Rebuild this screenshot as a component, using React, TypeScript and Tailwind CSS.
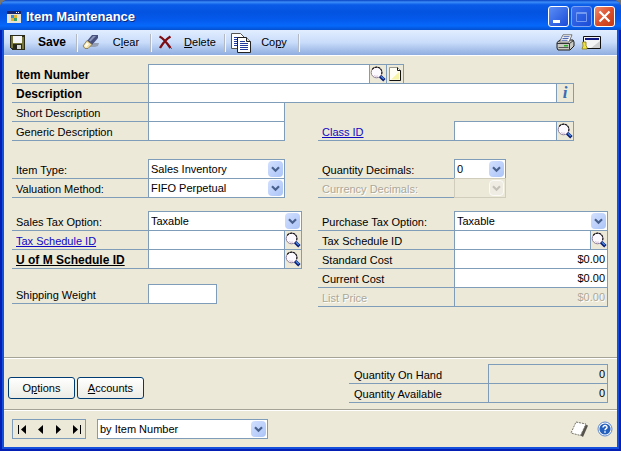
import type { ReactNode } from "react";

const Magnifier = () => (
  <svg width="16" height="16" viewBox="0 0 16 16" className="block">
    <circle cx="6.500" cy="6.500" r="5.300" fill="#fdfaff" stroke="#8d7f98" />
    <path d="M2.200 3.500A5.300 5.300 0 0 1 11.500 8.500" fill="none" stroke="#111" strokeWidth="1.100" strokeDasharray="2.500 .6" />
    <path d="M4 9.500a4 4 0 0 0 4 .5" fill="none" stroke="#d9c6dc" />
    <path d="M10.200 10.200L14.400 14.200" stroke="#0a1e78" strokeWidth="3.400" />
    <path d="M11 10.300L13.800 13" stroke="#4c8be0" strokeWidth="1.300" />
  </svg>
);

const Note = () => (
  <svg width="16" height="16" viewBox="0 0 16 16" className="block">
    <path d="M2.500 1.500h8l3 3v10h-11z" fill="#fffef4" stroke="#9a9a90" />
    <path d="M4 13.500L12 6v7.500z" fill="#f8f4a8" />
    <path d="M10.500 1.500v3h3v10h-11" fill="none" stroke="#111" />
  </svg>
);

const Chevron = ({ off = false }: { off?: boolean }) => (
  <span
    className={
      off
        ? "pointer-events-none absolute inset-y-px right-px flex w-[15px] items-center justify-center rounded-sm border border-[#fbfaf6] bg-[#efede3]"
        : "pointer-events-none absolute inset-y-px right-px flex w-[15px] items-center justify-center rounded-sm bg-gradient-to-br from-[#d3e0fe] to-[#abc4f7]"
    }
  >
    <svg width="9" height="7" viewBox="0 0 9 7">
      <path d="M1 1.200L4.500 4.700L8 1.200" fill="none" stroke={off ? "#c4c2b8" : "#49618e"} strokeWidth="2.200" />
    </svg>
  </span>
);

const FIELD = "-mt-px h-5 border";

function Row({ id, label, tone = "", className = "", children }: { id: string; label: ReactNode; tone?: string; className?: string; children: ReactNode }) {
  return (
    <div className={`flex h-[19px] ${className}`}>
      <label htmlFor={id} className={`w-[136px] shrink-0 border-b border-[#7f9db9] pl-1 pt-0.5 leading-4 whitespace-nowrap ${tone}`}>
        {label}
      </label>
      {children}
    </div>
  );
}

function Text({ id, className = "", value = "", disabled = false }: { id: string; className?: string; value?: string; disabled?: boolean }) {
  return (
    <input
      id={id}
      defaultValue={value}
      disabled={disabled}
      className={`${FIELD} min-w-0 border-[#7f9db9] px-0.5 text-right leading-4 ${disabled ? "bg-[#ece9d8] text-[#aca899] [text-shadow:1px_1px_0_#fff]" : "bg-white"} ${className}`}
    />
  );
}

function Combo({ id, value, className = "", disabled = false }: { id: string; value: string; className?: string; disabled?: boolean }) {
  return (
    <div className={`${FIELD} relative ${disabled ? "border-[#d0cdbd] bg-[#ece9d8]" : "border-[#7f9db9] bg-white"} ${className}`}>
      <select id={id} disabled={disabled} className="block h-[17px] w-full appearance-none pl-0.5 leading-4 outline-none">
        <option>{value}</option>
      </select>
      <Chevron off={disabled} />
    </div>
  );
}

function Lookup({ label, children }: { label: string; children?: ReactNode }) {
  return (
    <button aria-label={label} className={`${FIELD} -ml-px flex w-[18px] shrink-0 items-center justify-center border-[#7f9db9] bg-[#ece9d8]`}>
      {children ?? <Magnifier />}
    </button>
  );
}

function Tool({ icon, children }: { icon: ReactNode; children: ReactNode }) {
  return (
    <button className="flex w-[74px] items-center pr-1">
      <span className="flex w-[26px] shrink-0 justify-center">{icon}</span>
      <span className="flex-1 text-center">{children}</span>
    </button>
  );
}

const Divider = () => <span className="-ml-px h-[18px] w-px self-center bg-[#fbf6e6] shadow-[-1px_0_0_#b4bac4]" />;

const Rule = () => <hr className="h-0.5 border-0 border-t border-b border-t-[#a5a395] border-b-white" />;

const SaveIcon = () => (
  <svg width="15" height="15" viewBox="0 0 15 15" shapeRendering="crispEdges">
    <path d="M0 0h15v15H2L0 13z" fill="#2b2b1c" />
    <path d="M1 1h2v12H1zM12 2h2v12h-2zM3 8h9v1H3z" fill="#77773c" />
    <path d="M3 1h9v7H3z" fill="#f4f5f8" />
    <path d="M5 10h6v4H5z" fill="#d6d6d0" />
    <path d="M5 10h2v4H5z" fill="#222" />
  </svg>
);

const EraserIcon = () => (
  <svg width="18" height="15" viewBox="0 0 18 15">
    <path d="M8 11l4-3h5l-1 3-3 1H8z" fill="#95a0b4" />
    <path d="M10 0h6v3l-6 7-5-4z" fill="#47507c" />
    <path d="M11 1h3L8.500 6.500 7 5.500z" fill="#8a95ba" />
    <path d="M5 5.500L10 9.500L6 13.500H3L1 11z" fill="#f3dfa4" stroke="#7d7048" strokeWidth=".8" />
    <path d="M2.500 10.500l2.500-3 2 1.500-3 3.500z" fill="#fffdf2" />
  </svg>
);

const DeleteIcon = () => (
  <svg width="15" height="15" viewBox="0 0 15 15">
    <path d="M1.500 1.500C5 3 9 8 12.500 13M12.500 1.500C8 4 5 8 2 13" fill="none" stroke="#7c0d12" strokeWidth="2.400" />
    <path d="M12 12l2 2" stroke="#7c0d12" strokeDasharray="1 1" />
  </svg>
);

const CopyIcon = () => (
  <svg width="21" height="20" viewBox="0 0 21 20">
    <path d="M.5.500h9l4 4v11H.5z" fill="#fff" stroke="#555" />
    <path d="M3 4.500h5M3 6.500h3M3 8.500h3M3 10.500h3M3 12.500h3" stroke="#223a9c" />
    <path d="M6.500 4.500h9l4 4v11h-13z" fill="#fff" stroke="#222" />
    <path d="M15.500 4.500v4h4" fill="#ddd" stroke="#222" />
    <path d="M9 8.500h5M9 10.500h8M9 12.500h8M9 14.500h8M9 16.500h8" stroke="#223a9c" />
  </svg>
);

const PrinterIcon = () => (
  <svg width="19" height="17" viewBox="0 0 19 17">
    <path d="M1 8.500L4 6h13l1 2v4l-4 4H2l-1-2z" fill="#c9c9c4" stroke="#1d1d1d" />
    <path d="M1 9.500h12.500L17.500 6.500M13.500 9.500v6" fill="none" stroke="#333" />
    <path d="M7 .8h9L13 8H3.500z" fill="#fff" stroke="#555" strokeWidth=".8" />
    <path d="M7.500 2.700h6M6.500 4.500h6M5.500 6.300h6" stroke="#3a56a8" strokeWidth=".9" />
    <path d="M8 11h4v1.500H8z" fill="#2db52d" />
    <path d="M2.500 13.500h10" stroke="#555" />
  </svg>
);

const WindowIcon = () => (
  <svg width="21" height="15" viewBox="0 0 21 15">
    <path d="M2.500 1.500h17v12h-17z" fill="#f4f4f4" stroke="#111" />
    <path d="M10 13l9-7v7z" fill="#d0d0d0" />
    <path d="M4 3h14v2H4z" fill="#101a80" />
    <path d="M1.500 7H5v4l1 1v2H1l1-3z" fill="#f0e43c" stroke="#85791d" strokeWidth=".8" />
  </svg>
);

const NAV = [
  ["First record", "M0 0h1v9H0zM8 0v9L3 4.500z"],
  ["Previous record", "M7 0v9L2 4.500z"],
  ["Next record", "M2 0v9L7 4.500z"],
  ["Last record", "M8 0h1v9H8zM1 0v9L6 4.500z"],
];

export default function App() {
  return (
    <div className="bg-[#77756d]">
      <div className="flex min-h-screen flex-col overflow-hidden rounded-t-lg bg-[#0a3fd8] font-['Liberation_Sans',Arial,sans-serif] text-[11px] text-black">
        <header className="flex h-[30px] items-center bg-[linear-gradient(#0842c4_0%,#3c8cf8_7%,#0a5ce8_16%,#0353e0_40%,#0458ea_62%,#0668fc_86%,#0450d0_100%)] pt-[3px] pr-1.5 pl-[7px]">
          <svg width="14" height="12" viewBox="0 0 14 12" shapeRendering="crispEdges">
            <path d="M0 0h14v12H0z" fill="#e6e3d3" />
            <path d="M0 0h14v3H0z" fill="#17266e" />
            <path d="M9 1h1v1H9zM11 1h1v1h-1z" fill="#fff" />
            <path d="M4 4h3v3H4z" fill="#3a8edb" />
            <path d="M7 4h3v3H7z" fill="#e3b632" />
            <path d="M4 7h3v3H4z" fill="#e3b632" />
            <path d="M7 7h3v3H7z" fill="#3aa06b" />
          </svg>
          <h1 className="flex-1 pl-[5px] text-[13px] font-bold text-white [text-shadow:1px_1px_0_#0a2a80]">Item Maintenance</h1>
          <div className="flex gap-[2px]">
            <button aria-label="Minimize" className="h-[21px] w-[21px] rounded-[3px] border border-white bg-gradient-to-br from-[#5c8df5] to-[#1b49d8]">
              <svg width="19" height="19" viewBox="0 0 19 19"><path d="M4 13h7v3H4z" fill="#fff" /></svg>
            </button>
            <button aria-label="Maximize" disabled className="h-[21px] w-[21px] rounded-[3px] border border-[#7fa4f2] bg-gradient-to-br from-[#3c70ee] to-[#1a4bd6]">
              <svg width="19" height="19" viewBox="0 0 19 19"><path d="M4.500 5.500h10v9h-10zM4 6.500h11" fill="none" stroke="#7399f0" /></svg>
            </button>
            <button aria-label="Close" className="h-[21px] w-[21px] rounded-[3px] border border-white bg-gradient-to-br from-[#ee8a6c] via-[#dd4f2b] to-[#c23a14]">
              <svg width="19" height="19" viewBox="0 0 19 19"><path d="M4.500 4.500l10 10M14.500 4.500l-10 10" stroke="#fff" strokeWidth="2.200" /></svg>
            </button>
          </div>
        </header>

        <div className="flex flex-1 flex-col border-x-2 border-b-2 border-[#0420b4]">
          <div className="flex flex-1 flex-col border-x-2 border-b-2 border-[#1450dc] bg-[#ece9d8]">
            <div role="toolbar" className="flex h-[26px] border-b border-white bg-gradient-to-b from-[#e2eeff] via-[#c9dcfa] to-[#8fade0]">
              <Tool icon={<SaveIcon />}><b className="text-xs">Save</b></Tool>
              <Divider />
              <Tool icon={<EraserIcon />}>C<u>l</u>ear</Tool>
              <Divider />
              <Tool icon={<DeleteIcon />}><u>D</u>elete</Tool>
              <Divider />
              <Tool icon={<span className="pl-1"><CopyIcon /></span>}>Co<u>p</u>y</Tool>
              <Divider />
              <div className="ml-auto flex items-center gap-1.5 pr-[15px]">
                <button aria-label="Print"><PrinterIcon /></button>
                <button aria-label="Window"><WindowIcon /></button>
              </div>
            </div>

            <main className="flex-1 pt-[9px] pr-[9px] pb-[50px] pl-2">
              <Row id="item" label="Item Number" tone="font-bold text-xs">
                <Text id="item" className="w-[222px]" />
                <Lookup label="Look up item" />
                <Lookup label="Item note"><Note /></Lookup>
              </Row>
              <Row id="desc" label="Description" tone="font-bold text-xs" className="mr-[34px]">
                <Text id="desc" className="flex-1" />
                <Lookup label="Item information">
                  <span className="font-['Liberation_Serif',serif] text-[17px] leading-4 font-bold text-[#3b6cb4] italic">i</span>
                </Lookup>
              </Row>
              <div className="grid grid-cols-[306px_minmax(0,1fr)]">
                <div>
                  <Row id="short" label="Short Description"><Text id="short" className="w-[137px]" /></Row>
                  <Row id="generic" label="Generic Description"><Text id="generic" className="w-[137px]" /></Row>
                </div>
                <Row id="class" label={<a href="#class" className="text-[#1108c4] underline">Class ID</a>} className="mt-[19px] mr-[34px]">
                  <Text id="class" className="flex-1" />
                  <Lookup label="Look up class" />
                </Row>
              </div>

              <div className="mt-[19px] grid grid-cols-[306px_minmax(0,1fr)]">
                <div>
                  <Row id="type" label="Item Type:"><Combo id="type" value="Sales Inventory" className="w-[137px]" /></Row>
                  <Row id="valuation" label="Valuation Method:"><Combo id="valuation" value="FIFO Perpetual" className="w-[137px]" /></Row>
                </div>
                <div>
                  <Row id="qdec" label="Quantity Decimals:"><Combo id="qdec" value="0" className="w-[52px]" /></Row>
                  <Row id="cdec" label="Currency Decimals:" tone="text-[#aca899] [text-shadow:1px_1px_0_#fff]"><Combo id="cdec" value="" disabled className="w-[52px]" /></Row>
                </div>
              </div>

              <div className="mt-[14px] grid grid-cols-[306px_minmax(0,1fr)]">
                <div>
                  <Row id="stax" label="Sales Tax Option:"><Combo id="stax" value="Taxable" className="w-[154px]" /></Row>
                  <Row id="sched" label={<a href="#sched" className="text-[#1108c4] underline">Tax Schedule ID</a>}>
                    <Text id="sched" className="w-[137px]" /><Lookup label="Look up tax schedule" />
                  </Row>
                  <Row id="uom" label={<a href="#uom" className="underline">U of M Schedule ID</a>} tone="font-bold text-xs">
                    <Text id="uom" className="w-[137px]" /><Lookup label="Look up unit of measure" />
                  </Row>
                  <Row id="weight" label="Shipping Weight" className="mt-4"><Text id="weight" className="w-[69px]" /></Row>
                </div>
                <div>
                  <Row id="ptax" label="Purchase Tax Option:"><Combo id="ptax" value="Taxable" className="flex-1" /></Row>
                  <Row id="psched" label="Tax Schedule ID"><Text id="psched" className="flex-1" /><Lookup label="Look up purchase tax schedule" /></Row>
                  <Row id="std" label="Standard Cost"><Text id="std" value="$0.00" className="flex-1" /></Row>
                  <Row id="cur" label="Current Cost"><Text id="cur" value="$0.00" className="flex-1" /></Row>
                  <Row id="list" label="List Price" tone="text-[#aca899] [text-shadow:1px_1px_0_#fff]"><Text id="list" value="$0.00" disabled className="flex-1" /></Row>
                </div>
              </div>
            </main>

            <Rule />
            <section className="flex items-start justify-between py-1.5 pr-[9px] pl-1">
              <div className="flex gap-0.5 pt-3">
                <button className="h-[22px] w-[67px] rounded-[3px] border border-[#003c74] bg-gradient-to-b from-white to-[#ecebe5]">O<u>p</u>tions</button>
                <button className="h-[22px] w-[67px] rounded-[3px] border border-[#003c74] bg-gradient-to-b from-white to-[#ecebe5]"><u>A</u>ccounts</button>
              </div>
              <dl>
                {[["Quantity On Hand", "0"], ["Quantity Available", "0"]].map(([name, qty]) => (
                  <div key={name} className="flex h-[19px]">
                    <dt className="w-[139px] border-b border-[#7f9db9] pt-0.5 pl-[5px] leading-4">{name}</dt>
                    <dd className={`${FIELD} w-[120px] border-[#7f9db9] px-0.5 text-right leading-[18px]`}>{qty}</dd>
                  </div>
                ))}
              </dl>
            </section>
            <Rule />

            <footer className="flex items-center py-2 pr-1 pl-2">
              <nav className="flex h-5 w-[74px] items-center justify-around border border-[#7f9db9]">
                {NAV.map(([name, d]) => (
                  <button key={name} aria-label={name}>
                    <svg width="9" height="9" viewBox="0 0 9 9" className="block"><path d={d} /></svg>
                  </button>
                ))}
              </nav>
              <div className="relative ml-[11px] h-5 w-[171px] border border-[#7f9db9] bg-white">
                <select aria-label="Sort order" className="block h-[18px] w-full appearance-none pl-0.5 leading-4 outline-none">
                  <option>by Item Number</option>
                </select>
                <Chevron />
              </div>
              <button aria-label="Window note" className="mr-[7px] ml-auto">
                <svg width="20" height="17" viewBox="0 0 20 17" className="block">
                  <path d="M6 1L18 4.500L13 16L10 14z" fill="#55534c" />
                  <path d="M6 1L16 3L10.500 14.500L1 12z" fill="#fff" stroke="#77756a" strokeDasharray="2 1" />
                </svg>
              </button>
              <button aria-label="Help">
                <svg width="16" height="16" viewBox="0 0 16 16" className="block">
                  <circle cx="8" cy="8" r="7" fill="#fff" stroke="#5c86cc" />
                  <circle cx="8" cy="8" r="5.600" fill="#2660bd" />
                  <path d="M6 6.500C6 3.800 10.200 4 10 6.400C9.900 7.700 8 7.600 8 9.200M8 10.300v1.500" fill="none" stroke="#fff" strokeWidth="1.500" />
                </svg>
              </button>
            </footer>
          </div>
        </div>
      </div>
    </div>
  );
}
